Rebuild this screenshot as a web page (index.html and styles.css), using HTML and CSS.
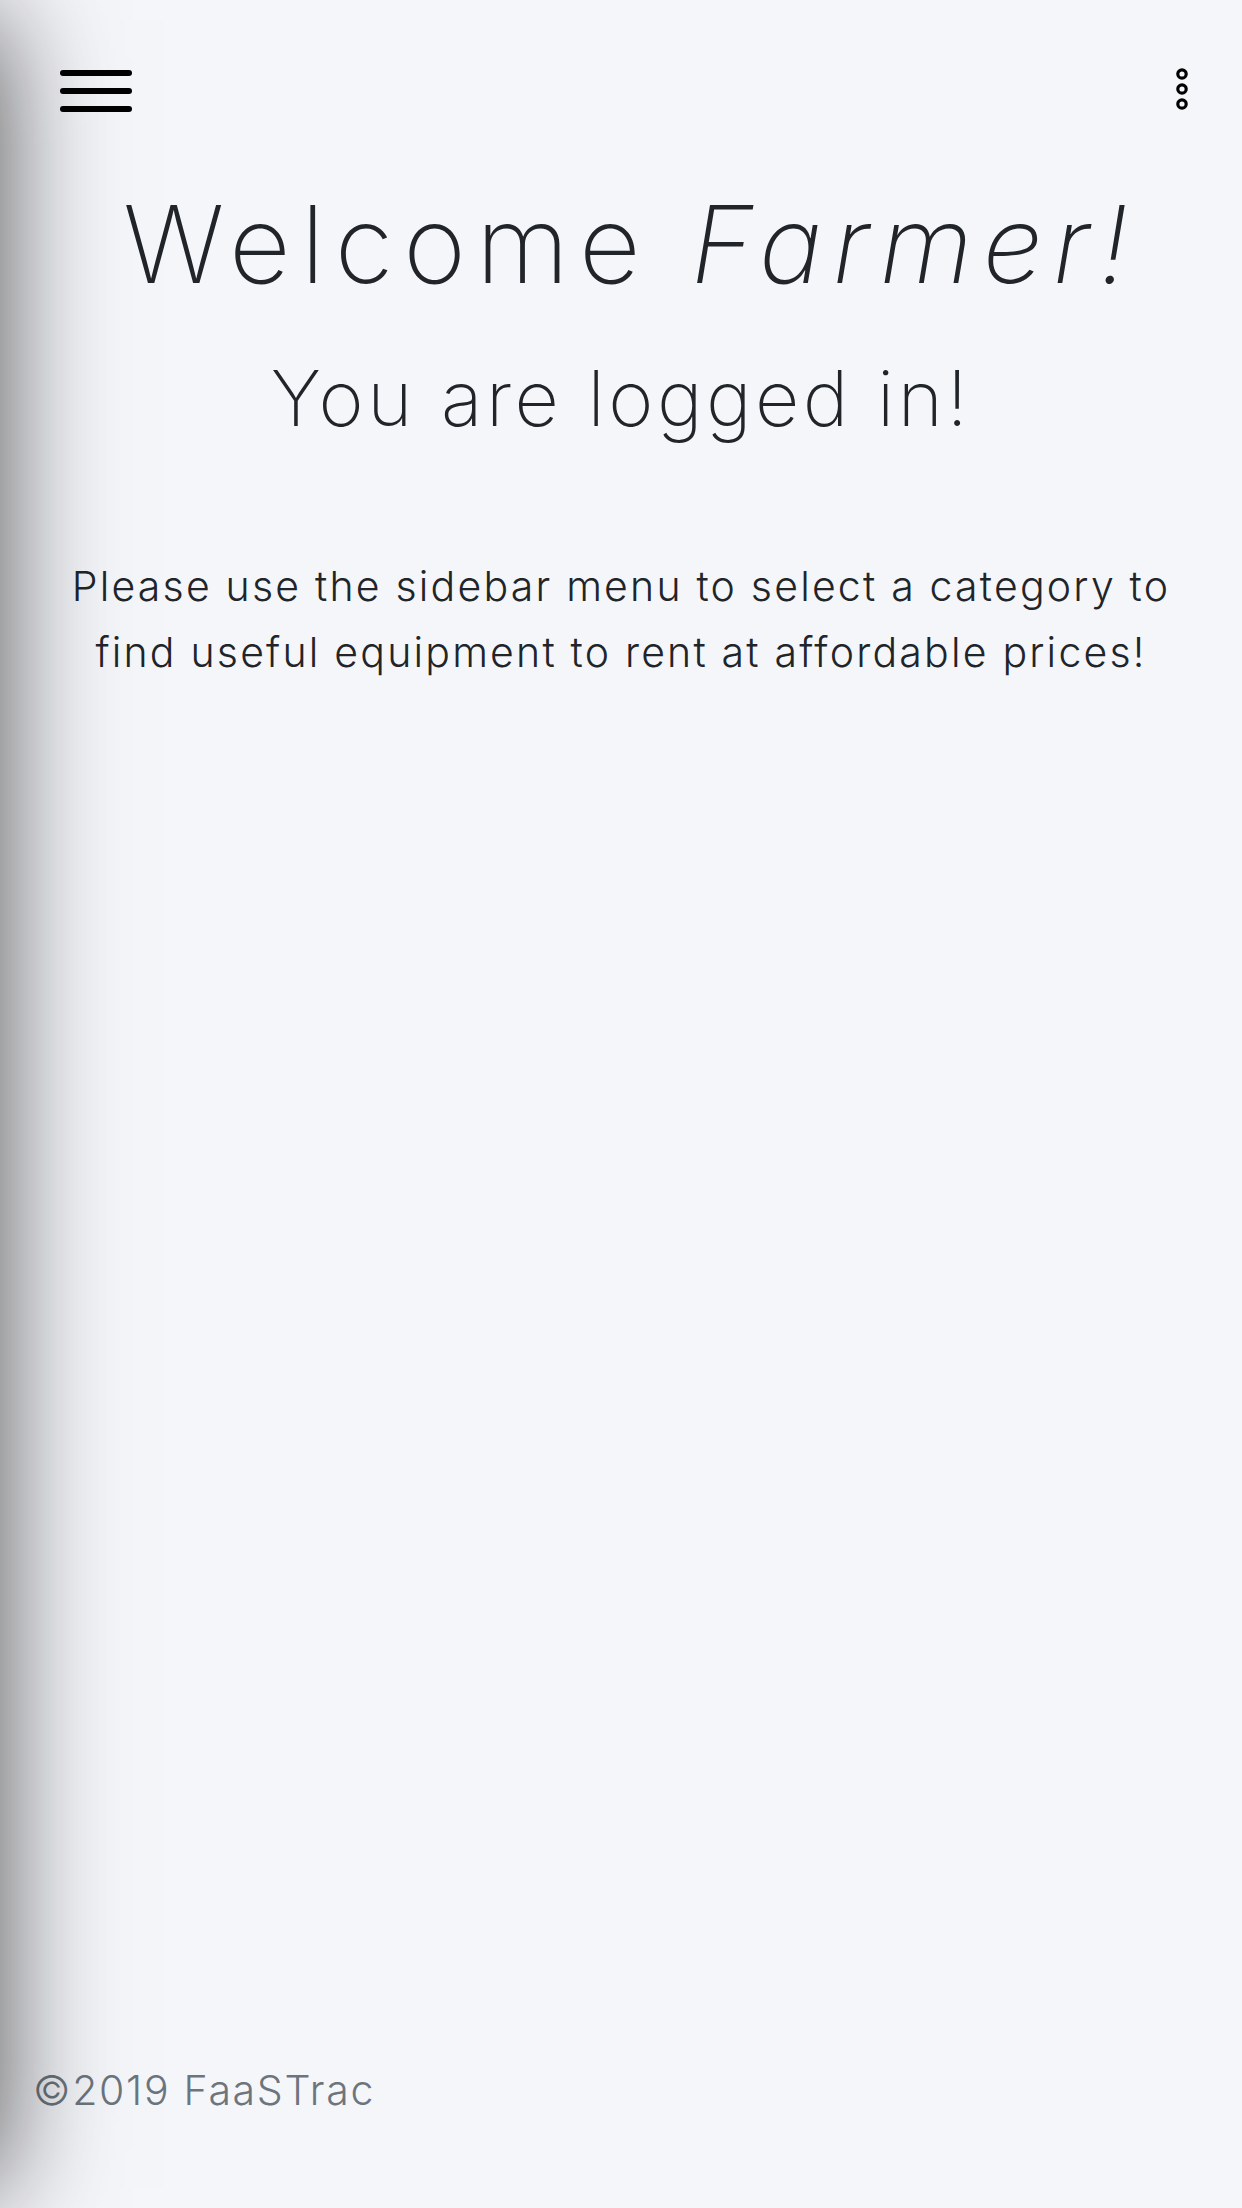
FILE: index.html
```html
<!DOCTYPE html>
<html>
<head>
<meta charset="utf-8">
<link rel="stylesheet" href="styles.css">
</head>
<body>
<div class="sidebar-shadow"></div>
<div class="page">
  <header class="topbar">
    <button class="menu-btn" aria-label="menu">
      <svg width="72" height="42" viewBox="0 0 72 42"><g stroke="#000" stroke-width="6" stroke-linecap="round"><line x1="3" y1="3" x2="69" y2="3"/><line x1="3" y1="21" x2="69" y2="21"/><line x1="3" y1="39" x2="69" y2="39"/></g></svg>
    </button>
    <button class="more-btn" aria-label="more">
      <svg width="14" height="44" viewBox="0 0 14 44"><g fill="none" stroke="#000" stroke-width="3.2"><circle cx="7" cy="7" r="4.2"/><circle cx="7" cy="22" r="4.2"/><circle cx="7" cy="37" r="4.2"/></g></svg>
    </button>
  </header>
  <main class="content">
    <h1 class="title">Welcome <em>Farmer!</em></h1>
    <h2 class="subtitle">You are logged in!</h2>
    <p class="lead">Please use the sidebar menu to select a category to find useful equipment to rent at affordable prices!</p>
  </main>
  <footer class="footer">©2019 FaaSTrac</footer>
</div>
</body>
</html>
```
FILE: styles.css
```css
html, body {
  margin: 0;
  padding: 0;
}
body {
  background: #f5f6fa;
  width: 1242px;
  height: 2208px;
  overflow: hidden;
  position: relative;
  font-family: "Inter", "Liberation Sans", sans-serif;
  color: #212529;
}
.sidebar-shadow {
  position: absolute;
  left: -400px;
  top: 20px;
  bottom: 20px;
  width: 400px;
  box-shadow: 0 0 110px rgba(0, 0, 0, 0.68);
  background: #f5f6fa;
}
.page {
  display: flex;
  flex-direction: column;
  height: 2208px;
}
.topbar {
  display: flex;
  justify-content: space-between;
  align-items: flex-start;
  padding: 70px 53px 0 60px;
}
.menu-btn, .more-btn {
  border: 0;
  background: none;
  padding: 0;
  margin: 0;
  display: block;
  line-height: 0;
}
.more-btn {
  margin-top: -3px;
}
.content {
  text-align: center;
  padding: 0 40px;
}
.title {
  font-weight: 200;
  font-size: 107px;
  line-height: 1;
  margin: 79px 0 0;
  letter-spacing: 10px;
  text-indent: 20px;
}
.title em {
  font-style: italic;
}
.subtitle {
  font-weight: 200;
  font-size: 77px;
  line-height: 1;
  margin: 62px 0 0;
  letter-spacing: 3.5px;
}
.lead {
  font-weight: 300;
  font-size: 41px;
  line-height: 66px;
  margin: 116px 0 0;
  letter-spacing: 2.2px;
}
.footer {
  margin-top: auto;
  padding: 0 0 93px 33px;
  font-weight: 300;
  font-size: 41px;
  line-height: 50px;
  letter-spacing: 1.7px;
  color: #6c757d;
}
```
